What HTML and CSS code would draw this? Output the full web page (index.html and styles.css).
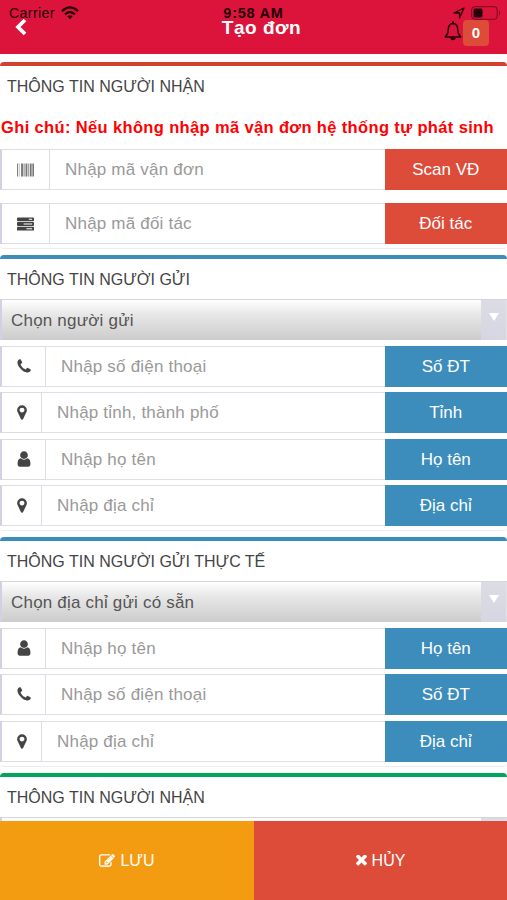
FILE: index.html
```html
<!DOCTYPE html>
<html lang="vi">
<head>
<meta charset="utf-8">
<meta name="viewport" content="width=device-width">
<title>Tạo đơn</title>
<link rel="stylesheet" href="styles.css">
</head>
<body>
<svg class="defs" width="0" height="0">
  <symbol id="phone" viewBox="192 0 1408 1792"><path d="M1600 1240q0 27-10 70.500t-11 68.500q-21 50-122 106-94 51-186 51-27 0-53-3.500t-57-12.500-47-14.500-55.500-20.500-49.500-18q-98-35-175-83-127-79-264-216t-216-264q-48-77-83-175-3-9-18-49.500t-20.500-55.500-14.500-47-12.500-57-3.500-53q0-92 51-186 56-101 106-122 25-11 68.500-21t70.500-10q14 0 21 3 18 6 53 76 11 19 30 54t35 63.500 31 53.500q3 4 17.500 25t21.500 35.500 7 28.500q0 20-28.500 50t-62 55-62 53-28.500 46q0 9 5 22.500t8.500 20.500 14 24 11.500 19q76 137 174 235t235 174q2 1 19 11.500t24 14 20.500 8.500 22.500 5q18 0 46-28.500t53-62 55-62 50-28.500q14 0 28.500 7t35.500 21.500 25 17.500q25 15 53.500 31t63.500 35 54 30q70 35 76 53 3 7 3 21z"/></symbol>
  <symbol id="marker" viewBox="384 0 1024 1792"><path d="M1152 640q0-106-75-181t-181-75-181 75-75 181 75 181 181 75 181-75 75-181zm256 0q0 109-33 179l-364 774q-16 33-47.500 52t-67.500 19-67.500-19-46.500-52l-365-774q-33-70-33-179 0-212 150-362t362-150 362 150 150 362z"/></symbol>
  <symbol id="user" viewBox="256 0 1280 1792"><path d="M1536 1399q0 109-62.500 187t-150.500 78h-854q-88 0-150.500-78t-62.500-187q0-85 8.500-160.500t31.500-152 58.500-131 94-89 134.500-34.500q131 128 313 128t313-128q76 0 134.500 34.500t94 89 58.500 131 31.500 152 8.500 160.500zm-256-887q0 159-112.500 271.500t-271.500 112.500-271.500-112.500-112.500-271.500 112.500-271.500 271.500-112.500 271.500 112.500 112.500 271.500z"/></symbol>
</svg>

<header class="topbar">
  <div class="status">
    <div class="status-left"><span class="carrier">Carrier</span>
      <svg class="wifi" viewBox="0 0 18 14"><path d="M1 5.200Q9-2.400 17 5.200M4 8.300Q9 3.600 14 8.300" fill="none" stroke="currentColor" stroke-width="2.300"/><path d="M6.300 10.300Q9 8 11.700 10.300L9 13.200z" fill="currentColor"/></svg>
    </div>
    <span class="clock">9:58 AM</span>
    <div class="status-right">
      <svg class="location" viewBox="0 0 12 12"><path d="M1 6L11 1 6.500 11V6z" fill="none" stroke="currentColor" stroke-width="1.300" stroke-linejoin="round"/></svg>
      <svg class="battery" viewBox="0 0 30 14"><rect x=".7" y=".7" width="25.500" height="12.600" rx="3" fill="none" stroke="currentColor" stroke-opacity=".55"/><rect x="2.500" y="2.500" width="9" height="9" rx="1.500" fill="currentColor"/><path d="M28 4.500q2 2.500 0 5z" fill="currentColor" opacity=".55"/></svg>
    </div>
  </div>
  <div class="titlebar">
    <svg class="back" viewBox="0 0 12 18"><path d="M10 2L3 9l7 7" fill="none" stroke="currentColor" stroke-width="3.800"/></svg>
    <h1 class="title">Tạo đơn</h1>
    <div class="alerts">
      <svg class="bell" viewBox="0 0 18 20"><path d="M1.200 16Q4.300 13 4.300 8.300 4.300 3 9 2.500 13.700 3 13.700 8.300 13.700 13 16.800 16z" fill="none" stroke="currentColor" stroke-width="1.500" stroke-linejoin="round"/><path d="M8 .5h2v2.500H8zM6.200 16.500h5.600Q11.500 19.300 9 19.300T6.200 16.500z" fill="currentColor"/></svg>
      <span class="badge">0</span>
    </div>
  </div>
</header>

<main class="content">
  <section class="box red first">
    <h2 class="heading">THÔNG TIN NGƯỜI NHẬN</h2>
    <p class="note">Ghi chú: Nếu không nhập mã vận đơn hệ thống tự phát sinh</p>
    <div class="row">
      <span class="addon wide"><svg class="i-bar" viewBox="0 0 18 14"><path d="M0 0h1v14H0zM2 0h.5v14H2zM4.300 0h2v14h-2zM7 0h1v14H7zM9 0h2v14H9zM12 0h.7v14H12zM13.500 0h2v14h-2zM16.300 0H18v14h-1.700z"/></svg></span>
      <span class="field f-code">Nhập mã vận đơn</span><span class="btn">Scan VĐ</span>
    </div>
    <div class="row">
      <span class="addon wide"><svg class="i-srv" viewBox="0 0 18 14"><path d="M1 0h16q1 0 1 1v2q0 1-1 1H1Q0 4 0 3V1q0-1 1-1zM1 5h16q1 0 1 1v2q0 1-1 1H1Q0 9 0 8V6q0-1 1-1zM1 10h16q1 0 1 1v2q0 1-1 1H1q-1 0-1-1v-2q0-1 1-1z"/><path d="M12.500 1.400H16v1.200h-3.500zM7 6.400h9v1.200H7zM10 11.400h6v1.200h-6z" fill="#fff"/></svg></span>
      <span class="field f-code">Nhập mã đối tác</span><span class="btn">Đối tác</span>
    </div>
  </section>

  <section class="box blue">
    <h2 class="heading">THÔNG TIN NGƯỜI GỬI</h2>
    <div class="select"><span class="value">Chọn người gửi</span><span class="arrow"></span></div>
    <div class="row"><span class="addon mid"><svg class="i-phone"><use href="#phone"/></svg></span><span class="field">Nhập số điện thoại</span><span class="btn">Số ĐT</span></div>
    <div class="row"><span class="addon slim"><svg class="i-marker"><use href="#marker"/></svg></span><span class="field">Nhập tỉnh, thành phố</span><span class="btn">Tỉnh</span></div>
    <div class="row"><span class="addon mid"><svg class="i-user"><use href="#user"/></svg></span><span class="field">Nhập họ tên</span><span class="btn">Họ tên</span></div>
    <div class="row"><span class="addon slim"><svg class="i-marker"><use href="#marker"/></svg></span><span class="field">Nhập địa chỉ</span><span class="btn">Địa chỉ</span></div>
  </section>

  <section class="box blue actual">
    <h2 class="heading">THÔNG TIN NGƯỜI GỬI THỰC TẾ</h2>
    <div class="select"><span class="value">Chọn địa chỉ gửi có sẵn</span><span class="arrow"></span></div>
    <div class="row"><span class="addon mid"><svg class="i-user"><use href="#user"/></svg></span><span class="field">Nhập họ tên</span><span class="btn">Họ tên</span></div>
    <div class="row"><span class="addon mid"><svg class="i-phone"><use href="#phone"/></svg></span><span class="field">Nhập số điện thoại</span><span class="btn">Số ĐT</span></div>
    <div class="row"><span class="addon slim"><svg class="i-marker"><use href="#marker"/></svg></span><span class="field">Nhập địa chỉ</span><span class="btn">Địa chỉ</span></div>
  </section>

  <section class="box green">
    <h2 class="heading">THÔNG TIN NGƯỜI NHẬN</h2>
    <div class="select"><span class="value"></span><span class="arrow"></span></div>
  </section>
</main>

<footer class="actions">
  <div class="action save"><svg class="i-edit" viewBox="0 128 1792 1536"><path d="M888 1184l116-116-152-152-116 116v56h96v96h56zm440-720q-16-16-33 1l-350 350q-17 17-1 33t33-1l350-350q17-17 1-33zm80 594v190q0 119-84.500 203.500t-203.500 84.500h-832q-119 0-203.500-84.500t-84.500-203.500v-832q0-119 84.500-203.500t203.500-84.500h832q63 0 117 25 15 7 18 23 3 17-9 29l-49 49q-14 14-32 8-23-6-45-6h-832q-66 0-113 47t-47 113v832q0 66 47 113t113 47h832q66 0 113-47t47-113v-126q0-13 9-22l64-64q15-15 35-7t20 29zm-96-738l288 288-672 672h-288v-288zm444 132l-92 92-288-288 92-92q28-28 68-28t68 28l152 152q28 28 28 68t-28 68z"/></svg><span>LƯU</span></div>
  <div class="action cancel"><svg class="i-times" viewBox="302 430 1188 1188"><path d="M1490 1322q0 40-28 68l-136 136q-28 28-68 28t-68-28l-294-294-294 294q-28 28-68 28t-68-28l-136-136q-28-28-28-68t28-68l294-294-294-294q-28-28-28-68t28-68l136-136q28-28 68-28t68 28l294 294 294-294q28-28 68-28t68 28l136 136q28 28 28 68t-28 68l-294 294 294 294q28 28 28 68z"/></svg><span>HỦY</span></div>
</footer>
</body>
</html>
```
FILE: styles.css
```css
* { box-sizing: border-box; }
body {
  margin: 0;
  height: 900px;
  overflow: hidden;
  display: flex;
  flex-direction: column;
  font-family: "Liberation Sans", Arial, sans-serif;
  font-size: 17px;
  color: #444;
  background: #fff;
}
svg { display: block; flex: none; fill: currentColor; }
.defs { position: absolute; }

.topbar { height: 54px; flex: none; background: #dc143c; padding-top: 5px; color: #250009; }
.status { height: 16px; display: grid; grid-template-columns: 1fr auto 1fr; align-items: center; }
.status-left { display: flex; align-items: center; gap: 6px; padding-left: 9px; }
.carrier { font-size: 14px; letter-spacing: .45px; line-height: 16px; }
.wifi { width: 18px; height: 14px; }
.clock { font-size: 14.500px; font-weight: bold; letter-spacing: .75px; line-height: 16px; }
.status-right { display: flex; justify-content: flex-end; align-items: center; gap: 6px; padding-right: 6px; }
.location { width: 12px; height: 12px; }
.battery { width: 30px; height: 14px; }
.titlebar { height: 28px; margin-top: -2px; display: grid; grid-template-columns: 1fr auto 1fr; align-items: start; }
.back { width: 12px; height: 18px; margin: -1px 0 0 15px; color: #fff; }
.title { margin: -1px 0 0 16px; font-size: 19px; line-height: 20px; color: #fff; letter-spacing: .5px; }
.alerts { display: flex; justify-content: flex-end; padding-right: 18px; gap: 1px; }
.bell { width: 18px; height: 20px; margin-top: 2px; }
.badge { width: 26px; height: 26px; margin-top: 1px; border-radius: 4px; background: #dd4b39; color: #fff; font-size: 15px; font-weight: bold; line-height: 26px; text-align: center; }

.content { flex: 1; min-height: 0; overflow: hidden; padding-top: 8px; }
.box { height: 276.500px; margin-bottom: 6px; border-top: 4px solid #3c8dbc; border-bottom: 1px solid #ececf0; border-radius: 4px; }
.box.red { height: 187px; border-top-color: #d2432f; }
.box.blue:not(.actual) { height: 276px; }
.box.actual { height: 230px; }
.box.green { border-top-color: #00a65a; }
.heading { margin: 0; height: 40px; padding: 0 7px; font-size: 16px; font-weight: normal; line-height: 42px; white-space: nowrap; }
.note { margin: 0; height: 43px; padding-left: 1px; font-size: 16.500px; font-weight: bold; letter-spacing: .36px; line-height: 42px; color: #f00; white-space: nowrap; }
.row { display: flex; height: 41px; margin-bottom: 5.500px; }
.red .row { margin-bottom: 13px; }
.addon { flex: none; padding-left: 15px; display: flex; align-items: center; border: solid #dcdce4; border-width: 1px 1px 1px 2px; border-left-color: #d2d0e2; }
.wide { width: 50px; }
.mid { width: 46px; }
.slim { width: 42px; }
.field { flex: 1; padding-left: 15px; border: solid #dfe0e6; border-width: 1px 0; line-height: 40px; letter-spacing: .2px; color: #999; white-space: nowrap; }
.btn { width: 122.500px; flex: none; background: #3c8dbc; color: #fff; line-height: 41px; text-align: center; }
.red .btn { background: #dd4b39; }
.i-bar, .i-srv { width: 17px; height: 14px; }
.i-bar { color: #777; }
.i-phone { width: 14px; height: 17px; }
.i-marker { width: 10px; height: 17px; }
.i-user { width: 14px; height: 18px; }
.select { display: flex; height: 41px; margin-bottom: 5.500px; border-top: 1px solid #d5d5dc; border-left: 2px solid #d2d0e2; background: linear-gradient(#fff, #e8e8e8 35%, #ccc); }
.value { flex: 1; padding-left: 9px; line-height: 41px; letter-spacing: .2px; color: #555; }
.arrow { width: 26px; display: flex; justify-content: center; border-right: 1px solid #e2e2e8; background: linear-gradient(#dcdce4, #d6d6e3); }
.arrow::after { content: ""; width: 0; height: 0; margin-top: 13px; border: 5px solid transparent; border-top: 8px solid #fff; border-bottom: 0; }

.actions { flex: none; height: 79px; display: grid; grid-template-columns: 254px 1fr; }
.action { display: flex; align-items: center; justify-content: center; gap: 5px; color: #fff; font-size: 16px; }
.save { background: #f39c12; }
.cancel { background: #dd4b39; }
.i-edit { width: 16px; height: 14px; stroke: currentColor; stroke-width: 40px; }
.i-times { width: 11px; height: 11px; }
```
